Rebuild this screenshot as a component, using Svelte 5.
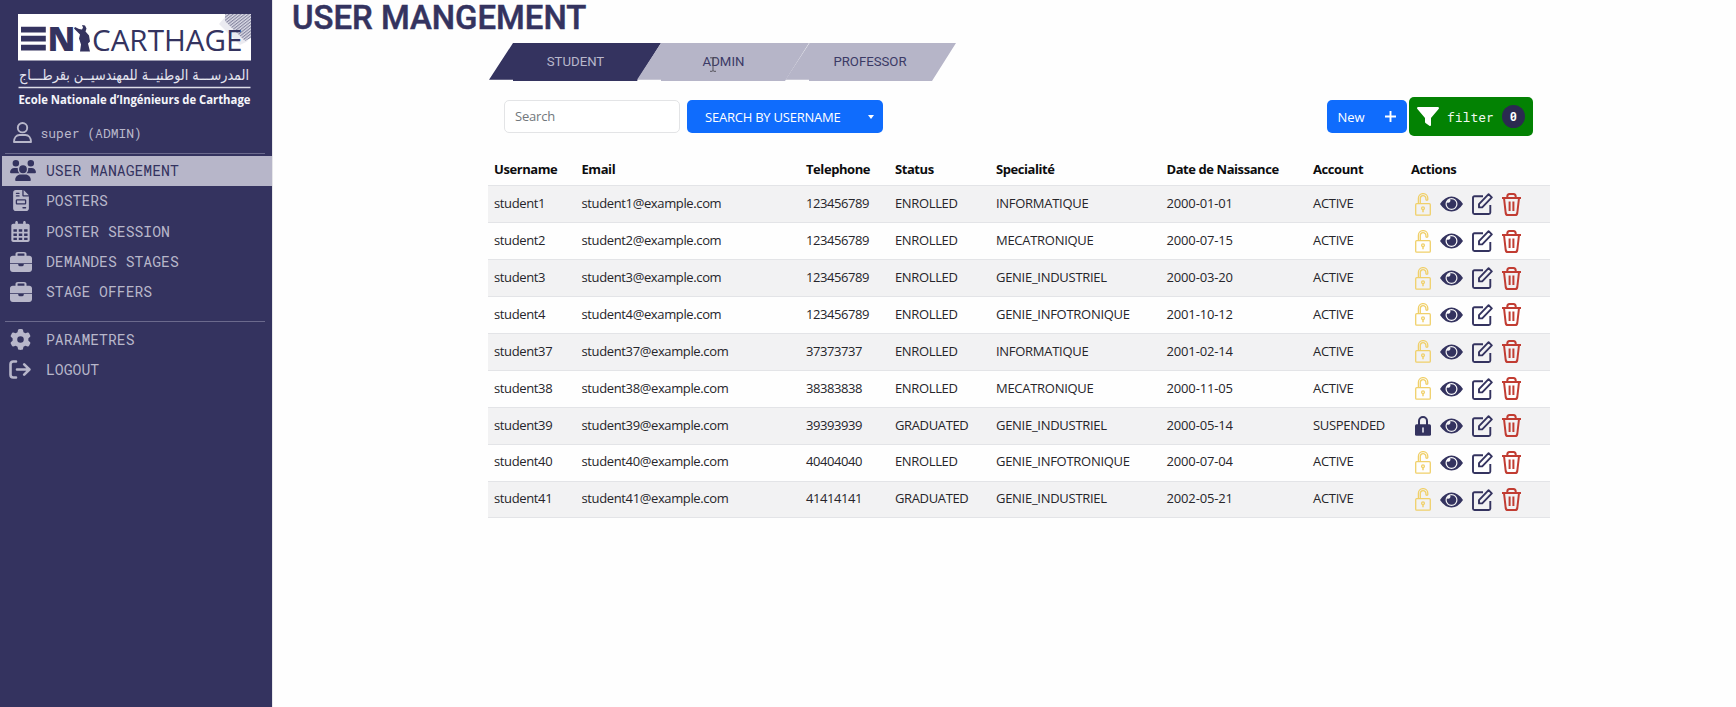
<script>
  const nav = [
    { icon: 'users', label: 'USER MANAGEMENT', active: true },
    { icon: 'doc', label: 'POSTERS' },
    { icon: 'calendar', label: 'POSTER SESSION' },
    { icon: 'case', label: 'DEMANDES STAGES' },
    { icon: 'case', label: 'STAGE OFFERS' }
  ];
  const footerNav = [
    { icon: 'gear', label: 'PARAMETRES' },
    { icon: 'logout', label: 'LOGOUT' }
  ];
  const tabs = ['STUDENT', 'ADMIN', 'PROFESSOR'];
  const heads = ['Username', 'Email', 'Telephone', 'Status', 'Specialité', 'Date de Naissance', 'Account', 'Actions'];
  const rows = [
    ['student1', '123456789', 'ENROLLED', 'INFORMATIQUE', '2000-01-01', 'ACTIVE'],
    ['student2', '123456789', 'ENROLLED', 'MECATRONIQUE', '2000-07-15', 'ACTIVE'],
    ['student3', '123456789', 'ENROLLED', 'GENIE_INDUSTRIEL', '2000-03-20', 'ACTIVE'],
    ['student4', '123456789', 'ENROLLED', 'GENIE_INFOTRONIQUE', '2001-10-12', 'ACTIVE'],
    ['student37', '37373737', 'ENROLLED', 'INFORMATIQUE', '2001-02-14', 'ACTIVE'],
    ['student38', '38383838', 'ENROLLED', 'MECATRONIQUE', '2000-11-05', 'ACTIVE'],
    ['student39', '39393939', 'GRADUATED', 'GENIE_INDUSTRIEL', '2000-05-14', 'SUSPENDED'],
    ['student40', '40404040', 'ENROLLED', 'GENIE_INFOTRONIQUE', '2000-07-04', 'ACTIVE'],
    ['student41', '41414141', 'GRADUATED', 'GENIE_INDUSTRIEL', '2002-05-21', 'ACTIVE']
  ];
</script>

{#snippet navIcon(name)}
  {#if name === 'users'}
    <svg width="26" height="21" viewBox="0 0 640 512" preserveAspectRatio="none" fill="currentColor"><path d="M144 0a80 80 0 1 1 0 160A80 80 0 1 1 144 0zM512 0a80 80 0 1 1 0 160A80 80 0 1 1 512 0zM0 298.700C0 239.800 47.800 192 106.700 192h42.700c15.900 0 31 3.500 44.600 9.700-1.300 7.200-1.900 14.700-1.900 22.300 0 38.200 16.800 72.500 43.300 96H21.300C9.600 320 0 310.400 0 298.700zM405.300 320h-.7c26.600-23.500 43.300-57.800 43.300-96 0-7.600-.7-15-1.900-22.300 13.600-6.300 28.700-9.700 44.600-9.700h42.700C592.200 192 640 239.800 640 298.700c0 11.800-9.600 21.300-21.300 21.300H405.300zM224 224a96 96 0 1 1 192 0 96 96 0 1 1-192 0zM128 485.300C128 411.700 187.700 352 261.300 352h117.400C452.300 352 512 411.700 512 485.300c0 14.700-11.900 26.700-26.700 26.700H154.700c-14.700 0-26.700-11.900-26.700-26.700z" /></svg>
  {:else if name === 'doc'}
    <svg width="16" height="21" viewBox="0 0 384 512" fill="currentColor"><path fill-rule="evenodd" d="M64 0C28.700 0 0 28.700 0 64v384c0 35.300 28.700 64 64 64h256c35.300 0 64-28.700 64-64V160H256c-17.700 0-32-14.300-32-32V0H64zM256 0v128h128L256 0zM80 64h64c8.800 0 16 7.200 16 16s-7.200 16-16 16H80c-8.800 0-16-7.200-16-16s7.200-16 16-16zm0 64h64c8.800 0 16 7.200 16 16s-7.200 16-16 16H80c-8.800 0-16-7.200-16-16s7.200-16 16-16zm16 96h192c17.700 0 32 14.300 32 32v64c0 17.700-14.300 32-32 32H96c-17.700 0-32-14.300-32-32v-64c0-17.700 14.300-32 32-32zm0 32v64h192v-64H96zm144 160h64c8.800 0 16 7.200 16 16s-7.200 16-16 16h-64c-8.800 0-16-7.200-16-16s7.200-16 16-16z" /></svg>
  {:else if name === 'calendar'}
    <svg width="19" height="21" viewBox="0 0 448 512" fill="currentColor"><path fill-rule="evenodd" d="M128 0c17.700 0 32 14.300 32 32v32h128V32c0-17.700 14.300-32 32-32s32 14.300 32 32v32h48c26.500 0 48 21.500 48 48v48H0v-48c0-26.500 21.500-48 48-48h48V32c0-17.700 14.300-32 32-32zM0 160h448v304c0 26.500-21.500 48-48 48H48c-26.500 0-48-21.500-48-48V160zm52 42v58h84v-58H52zm130 0v58h84v-58h-84zm130 0v58h84v-58h-84zM52 306v58h84v-58H52zm130 0v58h84v-58h-84zm130 0v58h84v-58h-84zM52 406v58h84v-58H52zm130 0v58h84v-58h-84zm130 0v58h84v-58h-84z" /></svg>
  {:else if name === 'case'}
    <svg width="22" height="20" viewBox="0 0 512 464" preserveAspectRatio="none" fill="currentColor"><path fill-rule="evenodd" d="M184 36h144c4.400 0 8 3.600 8 12v38H176V48c0-8 3.600-12 8-12zM128 44v42H64C28.700 86 0 110 0 145v115h512V145c0-35-28.700-59-64-59h-64V44c0-28-25-44-56-44H184c-31 0-56 16-56 44zM512 280H320v16c0 17.700-14.300 32-32 32h-64c-17.700 0-32-14.300-32-32v-16H0v120c0 35.300 28.700 64 64 64h384c35.300 0 64-28.700 64-64V280z" /></svg>
  {:else if name === 'gear'}
    <svg width="21" height="21" viewBox="0 0 512 512" fill="currentColor"><path d="M495.900 166.600c3.200 8.700 .5 18.400-6.400 24.600l-43.300 39.400c1.100 8.300 1.700 16.800 1.700 25.400s-.6 17.100-1.700 25.400l43.300 39.400c6.900 6.200 9.600 15.900 6.400 24.600-4.400 11.900-9.700 23.300-15.800 34.300l-4.700 8.100c-6.600 11-14 21.400-22.100 31.200-5.900 7.200-15.700 9.600-24.500 6.800l-55.700-17.700c-13.400 10.300-28.200 18.900-44 25.400l-12.500 57.100c-2 9.100-9 16.300-18.200 17.800-13.800 2.300-28 3.500-42.500 3.500s-28.700-1.200-42.500-3.500c-9.200-1.500-16.200-8.700-18.200-17.800l-12.500-57.100c-15.800-6.500-30.600-15.100-44-25.400L83.100 425.900c-8.800 2.800-18.600 .3-24.500-6.800-8.100-9.800-15.500-20.200-22.100-31.200l-4.700-8.100c-6.100-11-11.400-22.400-15.800-34.300-3.200-8.700-.5-18.400 6.400-24.600l43.300-39.400C64.600 273.100 64 264.600 64 256s.6-17.100 1.700-25.400L22.400 191.200c-6.900-6.200-9.600-15.900-6.400-24.600 4.400-11.900 9.700-23.300 15.800-34.300l4.700-8.100c6.600-11 14-21.400 22.100-31.200 5.900-7.200 15.700-9.600 24.500-6.800l55.700 17.700c13.400-10.300 28.200-18.900 44-25.400l12.500-57.100c2-9.100 9-16.300 18.200-17.800C227.300 1.200 241.500 0 256 0s28.700 1.200 42.500 3.500c9.200 1.500 16.200 8.700 18.200 17.800l12.500 57.100c15.800 6.500 30.600 15.100 44 25.400l55.700-17.700c8.800-2.800 18.600-.3 24.500 6.800 8.100 9.800 15.500 20.200 22.100 31.200l4.700 8.100c6.100 11 11.400 22.400 15.800 34.300zM256 336a80 80 0 1 0 0-160 80 80 0 1 0 0 160z" /></svg>
  {:else}
    <svg class="out" width="22" height="19" viewBox="0 0 22 19" fill="none" stroke="currentColor" stroke-width="2.600" stroke-linecap="round" stroke-linejoin="round"><path d="M7 1.500H4.200A2.700 2.700 0 0 0 1.500 4.200v10.600a2.700 2.700 0 0 0 2.700 2.700H7M8 9.500h12M15.200 4.300l5.200 5.200-5.200 5.200" /></svg>
  {/if}
{/snippet}

<div class="page">
  <aside>
    <svg class="logo" width="236" height="96" viewBox="0 0 236 96">
      <defs>
        <pattern id="hatch" width="2.400" height="2.400" patternUnits="userSpaceOnUse" patternTransform="rotate(-38)">
          <rect width="2.400" height="2.400" fill="#dcdce7" /><rect width="2.400" height="1.100" fill="#85859f" />
        </pattern>
      </defs>
      <rect width="233" height="46.500" fill="#fff" />
      <path d="M207 3l-6 7 21 21 8-4z" fill="#ebebf1" />
      <path d="M207 0h26v24l-6 3-20-20z" fill="url(#hatch)" />
      <g fill="#34335f">
        <path d="M3 12.800h24.800v5.700H3zM3 21.800h24.800v5.700H3zM3 30.800h24.800v5.700H3z" />
        <text x="29.500" y="36.500" textLength="28" lengthAdjust="spacingAndGlyphs" font-family="Open Sans" font-weight="800" font-size="33">N</text>
        <path d="M64 11l3 .500 1.500 3-1 3 3.500 4 1 6-2 2 2 8h-10l1-7-2-6 1-4-3-3-3-3 1-1.500 4 2 3 .500 1-2z" />
        <text x="74" y="36.800" textLength="150.500" lengthAdjust="spacingAndGlyphs" font-family="Open Sans" font-size="29">CARTHAGE</text>
      </g>
      <text x="231" y="66" direction="rtl" textLength="230" lengthAdjust="spacingAndGlyphs" font-family="DejaVu Sans" font-size="15" fill="#e5e5ef">المدرســـة الوطنيــة للمهندسيــن بقرطـــاج</text>
      <path d="M.5 73.500h232" stroke="#dcdce8" stroke-width="1.700" />
      <text x=".5" y="89.500" textLength="232" lengthAdjust="spacingAndGlyphs" font-family="Open Sans" font-weight="700" font-size="12" fill="#f5f5fa">Ecole Nationale d’Ingénieurs de Carthage</text>
    </svg>
    <div class="me">
      <svg width="19" height="21" viewBox="0 0 19 21" fill="none" stroke="currentColor" stroke-width="1.900" stroke-linejoin="round"><circle cx="9.500" cy="5.700" r="4.700" /><path d="M1 20c0-4.500 2.600-7 5.500-7h6c2.900 0 5.500 2.500 5.500 7z" /></svg>
      <span>super (ADMIN)</span>
    </div>
    <nav class="top">
      {#each nav as item}
        <div class="item" class:active={item.active}><i>{@render navIcon(item.icon)}</i><span>{item.label}</span></div>
      {/each}
    </nav>
    <nav class="bottom">
      {#each footerNav as item}
        <div class="item"><i>{@render navIcon(item.icon)}</i><span>{item.label}</span></div>
      {/each}
    </nav>
  </aside>

  <main>
    <h1>USER MANGEMENT</h1>
    <div class="tabs">
      {#each tabs as tab, i}
        <div class="tab" class:on={i === 0}>{tab}</div>
      {/each}
      <svg class="cursor" width="8" height="15" viewBox="0 0 8 15" fill="none" stroke="#55545a"><path d="M1 .8h2l1 .8 1-.8h2M4 1.500v12M1 14.300h2l1-.8 1 .8h2" /></svg>
    </div>

    <div class="tools">
      <div class="search">Search</div>
      <div class="btn by"><span>SEARCH BY USERNAME</span><b></b></div>
      <div class="btn new"><span>New</span>
        <svg width="11" height="11" viewBox="0 0 11 11" stroke="#fff" stroke-width="1.900"><path d="M5.500 0v11M0 5.500h11" /></svg>
      </div>
      <div class="filter">
        <svg width="22" height="19" viewBox="0 0 22 19" fill="#fff"><path d="M1.300 0h19.400c1.100 0 1.600 1.200.9 2L14 11v7c0 .9-.9 1.300-1.600.8L8.500 16c-.3-.3-.5-.6-.5-1v-4L.4 2C-.3 1.200.2 0 1.300 0z" /></svg>
        <span>filter</span><em>0</em>
      </div>
    </div>

    <div class="table">
      <div class="row head">
        {#each heads as h}<span>{h}</span>{/each}
      </div>
      {#each rows as r, i}
        <div class="row" class:odd={i % 2 === 0}>
          <span class="u">{r[0]}</span>
          <span class="e">{r[0]}@example.com</span>
          <span class="t">{r[1]}</span>
          <span class="s">{r[2]}</span>
          <span class="p">{r[3]}</span>
          <span class="d">{r[4]}</span>
          <span class="a">{r[5]}</span>
          <span class="actions">
            {#if r[5] === 'ACTIVE'}
              <svg width="16" height="23" viewBox="0 0 16 23" fill="none" stroke="#f0d06a" stroke-width="1.300"><rect x=".7" y="10.700" width="14.600" height="11.500" rx="1" /><path d="M3.400 10.700V5.300a4.700 4.700 0 0 1 9.400 0v1.200c0 1.100-1.900 1.100-1.900 0V5.400a2.800 2.800 0 0 0-5.600 0v5.300" /><circle cx="8" cy="15.300" r="1.400" /><path d="M8 16.700v2.500" stroke-width="1.500" /></svg>
            {:else}
              <svg width="16" height="23" viewBox="0 0 16 23"><path d="M4 12V7a4 4 0 0 1 8 0v5" fill="none" stroke="#34335f" stroke-width="2" /><rect y="10.200" width="16" height="11.500" rx="1.500" fill="#34335f" /><path d="M8 14v4" stroke="#e7e6ee" stroke-width="1.600" stroke-linecap="round" /></svg>
            {/if}
            <svg width="23" height="16" viewBox="0 0 23 16"><path fill="#34335f" fill-rule="evenodd" d="M0 8Q5 .5 11.500.5T23 8Q18 15.500 11.500 15.500T0 8zM11.500 2a6 6 0 1 0 0 12 6 6 0 0 0 0-12zM11.500 3.200a4.800 4.800 0 1 1-4.800 4.800c0-.7.100-1 .3-1.500 2 1.200 4.300-.8 3.200-3.200z" /></svg>
            <svg width="21" height="22" viewBox="0 0 21 22" fill="none" stroke="#34335f" stroke-width="1.900" stroke-linejoin="round"><path d="M11 3.200H2.500C1.500 3.200 1 3.700 1 4.700v14.800c0 1 .5 1.500 1.500 1.500h14.300c1 0 1.500-.5 1.500-1.500V12" /><path d="M16.600 1.200l3.200 3.200-9.600 10H7v-3.200z" /></svg>
            <svg width="19" height="23" viewBox="0 0 19 23" fill="none" stroke="#c13c32" stroke-width="2" stroke-linejoin="round"><path d="M0 5h19M2 5l1.700 15c.2 1.300.8 2 2 2h7.600c1.200 0 1.800-.7 2-2L17 5M5.300 5V3.500c0-1.500.8-2.500 2.200-2.500h4c1.400 0 2.200 1 2.200 2.500V5M7.600 8.500v9.500M11.400 8.500v9.500" /></svg>
          </span>
        </div>
      {/each}
    </div>
  </main>
</div>

<style>
  :global(body) { margin: 0; background: #fefefe; }
  .page { display: flex; height: 707px; overflow: hidden; }
  svg { display: block; flex: none; }
  aside { width: 272px; flex: none; box-sizing: border-box; background: #34335f; color: #b8b7ca; font-family: "Roboto Mono", "DejaVu Sans Mono", monospace; }
  .logo { margin: 14px 0 0 18px; overflow: visible; }
  .me { display: flex; align-items: center; gap: 8.500px; height: 21px; margin: 12px 0 0 13px; font-size: 13px; }
  .top { margin-top: 9.500px; }
  .top::before, .bottom::before { content: ""; display: block; height: 1px; margin: 0 7px 2px 5px; background: #6b6a8d; }
  .bottom { margin-top: 14.500px; }
  .item { display: flex; align-items: center; box-sizing: border-box; height: 30.300px; margin-left: 2px; padding-left: 5px; font-size: 14.750px; }
  .item i { display: flex; justify-content: center; width: 27px; margin-right: 12px; }
  .item.active i { padding-left: 2px; margin-right: 10px; }
  .out { margin-left: -1px; }
  .item.active { background: #b7b6c9; color: #34335f; }

  main { flex: 1; border-left: 1px solid #e7e7ea; }
  h1 { margin: 0 0 0 19px; height: 43px; font: 500 32.900px/36px Roboto, sans-serif; -webkit-text-stroke: .5px #34335f; color: #34335f; white-space: nowrap; }
  .tabs { position: relative; display: flex; margin-left: 216px; height: 38px; }
  .tab { box-sizing: border-box; width: 172px; padding: 0 0 2px 1px; margin-right: -24px; height: 38px; display: flex; align-items: center; justify-content: center; background: #b6b5c8; color: #3b3a66; font: 13.200px Roboto, sans-serif; clip-path: polygon(24px 0, 100% 0, 148px 100%, 24px 100%, 24px 36.800px, 0 36.800px); }
  .tab.on { background: #34335f; color: #b9b8cc; }
  .tab:last-of-type { padding-left: 0; padding-right: 2px; clip-path: polygon(24.500px 0, 171px 0, 147px 100%, 24px 100%, 24px 36.800px, .5px 36.800px); }
  .cursor { position: absolute; left: 220px; top: 14px; }

  .tools { display: flex; align-items: center; height: 39px; margin: 16px 0 0 231px; font: 13px "Segoe UI", "Open Sans", sans-serif; }
  .search { box-sizing: border-box; width: 176px; height: 33px; padding: 0 10px; border: 1px solid #e3e4e6; border-radius: 5px; background: #fff; color: #72777c; line-height: 31px; letter-spacing: -.2px; }
  .btn { display: flex; align-items: center; box-sizing: border-box; height: 33px; border-radius: 5px; background: #0f6cfd; color: #fff; }
  .by { width: 196px; margin-left: 6.500px; padding: 0 8.500px 0 18.500px; justify-content: space-between; white-space: nowrap; letter-spacing: -.23px; }
  .by b { border: 3.500px solid transparent; border-top: 4px solid #fff; border-bottom: 0; }
  .new { width: 80px; margin-left: 444px; padding: 0 11px; justify-content: space-between; }
  .filter { display: flex; align-items: center; box-sizing: border-box; width: 124px; height: 39px; margin-left: 2.500px; padding-left: 8px; border-radius: 5px; background: #038203; color: #eef8ee; font: 13px "Roboto Mono", "DejaVu Sans Mono", monospace; }
  .filter svg { margin-right: 8px; }
  .filter em { width: 23px; height: 23px; margin-left: 8px; border-radius: 50%; background: #2b2a50; color: #fff; font: 700 12px/23px "Roboto Mono", "DejaVu Sans Mono", monospace; text-align: center; }

  .table { width: 1062px; margin: 16px 0 0 215px; font: 13px/18px "Segoe UI", "Open Sans", sans-serif; color: #26252a; }
  .row { display: grid; grid-template-columns: 87.500px 224.500px 89px 101px 170.500px 146.500px 98px 1fr; align-items: center; box-sizing: border-box; height: 36.950px; padding: 0 0 2.200px 6px; border-bottom: 1px solid #e3e4e7; white-space: nowrap; }
  .row.head { height: 34px; padding-bottom: 0; font-weight: 700; letter-spacing: -.43px; color: #0c0c0e; }
  .odd { background: #f2f2f3; }
  .u, .e { letter-spacing: -.37px; }
  .t { letter-spacing: -.42px; }
  .s { letter-spacing: -.36px; }
  .p { letter-spacing: -.28px; }
  .d { letter-spacing: -.15px; }
  .a { letter-spacing: -.3px; }
  .actions { display: flex; align-items: center; height: 23px; gap: 8.900px; padding: 2.500px 0 0 4px; }
</style>
